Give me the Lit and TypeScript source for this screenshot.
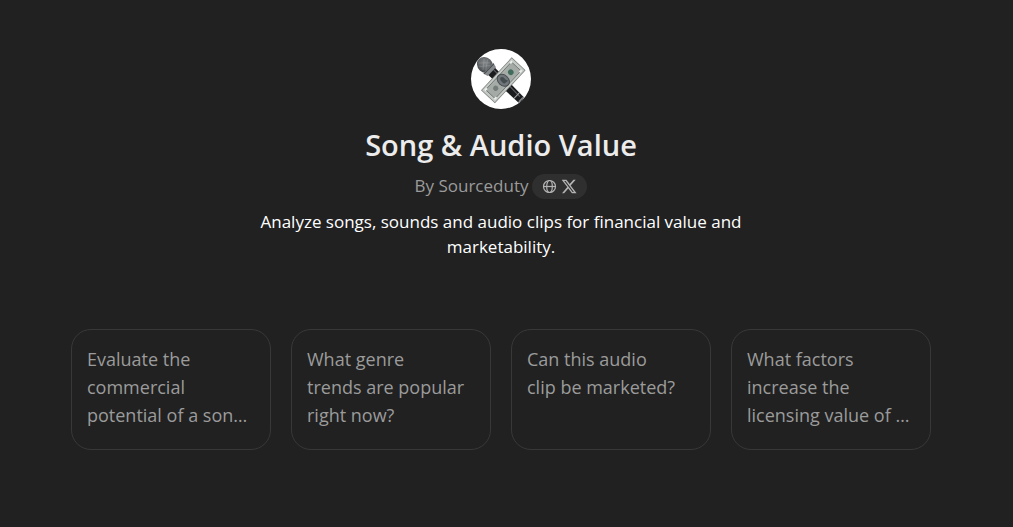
import { LitElement, html, css, svg } from "lit";
import { customElement, property } from "lit/decorators.js";

@customElement("gpt-avatar")
class GptAvatar extends LitElement {
  static styles = css`
    :host { display: block; width: 60px; height: 60px; }
    svg { display: block; width: 100%; height: 100%; border-radius: 50%; background: #fff; }
  `;
  render() {
    const dots = [0, 1, 2, 3].map((i) => svg`<path d="M-10 ${-5 + i * 3.4}H10" stroke="#b4b8b8" stroke-width=".5"/>`);
    return html`
      <svg viewBox="0 0 60 60" role="img" aria-label="Microphone crossed with a banknote">
        <defs>
          <radialGradient id="head" cx=".4" cy=".4" r=".65">
            <stop offset="0" stop-color="#85888a" />
            <stop offset=".65" stop-color="#5e6264" />
            <stop offset="1" stop-color="#3e4143" />
          </radialGradient>
        </defs>
        <g transform="translate(14 16) rotate(44)">
          <path d="M7 -5 L50 -3.8 Q53 0 50 3.8 L7 5Z" fill="#1b1c1e" />
          <path d="M9 -2.5 L47 -1.5" stroke="#606466" stroke-width="1" />
          <path d="M44 -3.8V3.8" stroke="#a4a8aa" stroke-width="1" />
          <path d="M50 -3V3" stroke="#85898b" stroke-width="1.5" />
          <ellipse rx="8.5" ry="7.5" fill="url(#head)" />
          <path d="M4.5 -7.3 L9.5 -6 V6 L4.5 7.3Z" fill="#85888b" />
          <path d="M5.5 -7V7" stroke="#45494b" stroke-width="1" />
          <path d="M-5 -4L2 5M-2 -6L4 3M-6 3L2 -5M-3 5L4 -3" stroke="#a0a4a6" stroke-width=".4" />
        </g>
        <g transform="translate(32.3 31.3) rotate(-47)">
          <rect x="-22.5" y="-9.5" width="45" height="19" fill="#777c7a" />
          <rect x="-21.8" y="-8.8" width="43.6" height="17.6" fill="#c6cac6" />
          <rect x="-19" y="-6.5" width="38" height="13" fill="#a4aaa6" stroke="#6b716d" stroke-width=".8" />
          ${dots}
          <ellipse rx="5.2" ry="6.8" fill="#70767a" stroke="#434a4c" stroke-width="1" />
          <path d="M-2 3Q-3 -3 0 -4Q3 -3 2 1L3 4Z" fill="#454d51" />
          <circle cx="-11" r="2.6" fill="#737c78" />
          <circle cx="11" r="2.8" fill="#426c5b" />
          <path d="M-20 -6.5h3M17 -6.5h3M-20 6.5h3M17 6.5h3" stroke="#eceeec" stroke-width="2" />
        </g>
      </svg>
    `;
  }
}

@customElement("prompt-card")
class PromptCard extends LitElement {
  @property() text = "";
  static styles = css`
    :host { display: flex; }
    .card {
      flex: 1;
      display: flex;
      align-items: flex-start;
      min-width: 0;
      min-height: 121px;
      padding: 15px;
      border: 1px solid #383838;
      border-radius: 20px;
      background: transparent;
      color: #9b9b9b;
      font: 400 18px/28px "Open Sans", "Noto Sans", sans-serif;
      text-align: left;
      cursor: pointer;
    }
    .card:hover { background: #2a2a2a; }
    .label { white-space: pre; }
  `;
  render() {
    return html`<button class="card" type="button"><span class="label">${this.text}</span></button>`;
  }
}

@customElement("app-root")
class AppRoot extends LitElement {
  private prompts = [
    "Evaluate the\ncommercial\npotential of a son…",
    "What genre\ntrends are popular\nright now?",
    "Can this audio\nclip be marketed?",
    "What factors\nincrease the\nlicensing value of …",
  ];
  static styles = css`
    :host {
      display: block;
      box-sizing: border-box;
      min-height: 100vh;
      padding: 49px 11px 0 0;
      background: #212121;
      color: #ececec;
      font-family: "Open Sans", "Noto Sans", sans-serif;
    }
    .page { display: flex; flex-direction: column; align-items: center; }
    h1 { margin: 17px 0 0; font-size: 29px; line-height: 38px; font-weight: 600; }
    .author {
      display: flex;
      align-items: center;
      gap: 4px;
      margin-top: 8px;
      color: #9b9b9b;
      font-size: 17px;
      line-height: 28px;
    }
    .links {
      display: flex;
      align-items: center;
      gap: 5px;
      height: 25px;
      padding: 0 10px;
      border-radius: 13px;
      background: #2f2f2f;
    }
    .links a { display: flex; color: #b4b4b4; }
    .links svg { display: block; width: 15px; height: 15px; }
    .description {
      max-width: 500px;
      margin: 9px 0 0;
      color: #fff;
      font-size: 17px;
      line-height: 25px;
      text-align: center;
    }
    .prompts {
      display: grid;
      grid-template-columns: repeat(4, minmax(0, 1fr));
      gap: 20px;
      width: 100%;
      max-width: 860px;
      margin-top: 70px;
    }
  `;
  render() {
    return html`
      <main class="page">
        <gpt-avatar></gpt-avatar>
        <h1>Song &amp; Audio Value</h1>
        <div class="author">
          <span>By Sourceduty</span>
          <div class="links">
            <a href="#website" aria-label="Website">
              <svg viewBox="0 0 15 15" fill="none" stroke="currentColor" stroke-width="1.2">
                <circle cx="7.5" cy="7.5" r="6" />
                <ellipse cx="7.5" cy="7.5" rx="2.8" ry="6" />
                <path d="M1.5 7.5H13.5" />
              </svg>
            </a>
            <a href="#x" aria-label="X">
              <svg viewBox="0 0 24 24" fill="currentColor">
                <path d="M18.24 1.25h3.7l-8.1 9.25 9.5 12.25h-7.45l-5.84-7.4-6.68 7.4H-.1l8.6-9.9L-.6 1.25h7.64l5.27 6.8ZM16.95 20.6h2.04L5.8 3.3H3.6Z" />
              </svg>
            </a>
          </div>
        </div>
        <p class="description">Analyze songs, sounds and audio clips for financial value and marketability.</p>
        <section class="prompts" aria-label="Conversation starters">
          ${this.prompts.map((p) => html`<prompt-card .text=${p}></prompt-card>`)}
        </section>
      </main>
    `;
  }
}
